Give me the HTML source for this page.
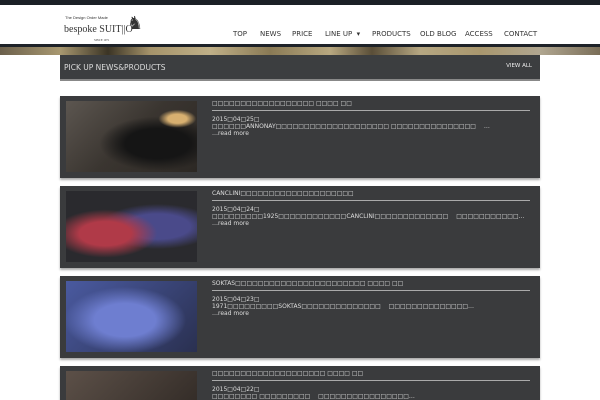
<!DOCTYPE html>
<html><head><meta charset="utf-8"><style>
*{margin:0;padding:0;box-sizing:border-box}
html,body{width:600px;height:400px;overflow:hidden}
body{background:#fff;font-family:"DejaVu Sans","Liberation Sans",sans-serif;position:relative}
.top{position:absolute;left:0;top:0;width:600px;height:5px;background:#1b2026}
.line{position:absolute;left:0;top:44px;width:600px;height:3px;background:#1e2228}
.tex{position:absolute;left:0;top:47px;width:600px;height:8px;background:linear-gradient(90deg,#6b604c,#a89870 10%,#3b3425 18%,#a5936a 25%,#c0b088 35%,#8a7a55 45%,#b8a880 55%,#5a4e38 62%,#b6a782 70%,#a9976e 80%,#b0a690 90%,#7a6e58)}
.logo{position:absolute;left:64px;top:15px;font-family:"Liberation Serif",serif;color:#333}
.logo .s{font-size:4px;font-family:"Liberation Sans";position:absolute;top:0;left:1px;white-space:nowrap}
.logo .b{font-size:10px;position:absolute;top:9px;left:0;white-space:nowrap}
.logo .d{font-size:3px;position:absolute;top:23px;left:30px;white-space:nowrap}
.nav{position:absolute;top:30px;font-size:7px;color:#333;white-space:nowrap}
.ph{position:absolute;left:60px;top:55px;width:480px;height:26px;background:#3c3e40;border-bottom:2px solid #888;color:#ddd}
.ph .t{position:absolute;left:4px;top:8px;font-size:7.5px}
.ph .v{position:absolute;right:8px;top:8px;font-size:5.5px;color:#eee}
.card{position:absolute;left:60px;width:480px;height:82px;background:#3a3b3d;box-shadow:0 2px 2px #aaa;color:#ddd;overflow:hidden}
.img{position:absolute;left:6px;top:5px;width:131px;height:71px}
.ct{position:absolute;left:152px;top:4px;width:318px;font-size:6px;line-height:7px;white-space:nowrap;overflow:hidden}
.ct .h{border-bottom:1px solid #aaa;padding-bottom:2px;margin-bottom:5px;height:11px}
</style></head><body>
<div class="top"></div>
<div class="logo"><span class="s">The Design Order Made</span><span class="b">bespoke SUIT||O</span><span class="d">SINCE 1971</span><span style="position:absolute;left:63px;top:-2px;font-size:18px">♞</span></div>
<div class="nav" style="left:233px">TOP</div>
<div class="nav" style="left:260px">NEWS</div>
<div class="nav" style="left:292px">PRICE</div>
<div class="nav" style="left:325px">LINE UP&nbsp;&nbsp;▾</div>
<div class="nav" style="left:372px">PRODUCTS</div>
<div class="nav" style="left:420px">OLD BLOG</div>
<div class="nav" style="left:465px">ACCESS</div>
<div class="nav" style="left:504px">CONTACT</div>
<div class="line"></div><div class="tex"></div>
<div class="ph"><span class="t">PICK UP NEWS&amp;PRODUCTS</span><span class="v">VIEW ALL</span></div>

<div class="card" style="top:96px"><div class="img" style="background:radial-gradient(ellipse at 85% 25%,#d8b070 6%,transparent 12%),radial-gradient(ellipse at 70% 60%,#151515 25%,transparent 45%),linear-gradient(135deg,#5c5650,#3a3530 50%,#2c2824)"></div>
<div class="ct"><div class="h">□□□□□□□□□□□□□□□□□□ □□□□ □□</div>2015□04□25□<br>□□□□□□ANNONAY□□□□□□□□□□□□□□□□□□□□ □□□□□□□□□□□□□□□　 …<br>…read more</div></div>

<div class="card" style="top:186px"><div class="img" style="background:radial-gradient(ellipse at 30% 60%,#b03a48 20%,transparent 40%),radial-gradient(ellipse at 70% 50%,#4a4a8a 25%,transparent 45%),#2a2a2e"></div>
<div class="ct"><div class="h">CANCLINI□□□□□□□□□□□□□□□□□□□□</div>2015□04□24□<br>□□□□□□□□□1925□□□□□□□□□□□□CANCLINI□□□□□□□□□□□□□　 □□□□□□□□□□□…<br>…read more</div></div>

<div class="card" style="top:276px"><div class="img" style="background:radial-gradient(ellipse at 45% 55%,#6e7ed0 30%,transparent 60%),linear-gradient(135deg,#4a5aa0,#2a3050)"></div>
<div class="ct"><div class="h">SOKTAS□□□□□□□□□□□□□□□□□□□□□□□ □□□□ □□</div>2015□04□23□<br>1971□□□□□□□□□SOKTAS□□□□□□□□□□□□□□　 □□□□□□□□□□□□□□…<br>…read more</div></div>

<div class="card" style="top:366px;height:34px"><div class="img" style="background:linear-gradient(135deg,#5c5048,#2a2420)"></div>
<div class="ct"><div class="h">□□□□□□□□□□□□□□□□□□□□ □□□□ □□</div>2015□04□22□<br>□□□□□□□□ □□□□□□□□□　 □□□□□□□□□□□□□□□□…</div></div>
</body></html>
